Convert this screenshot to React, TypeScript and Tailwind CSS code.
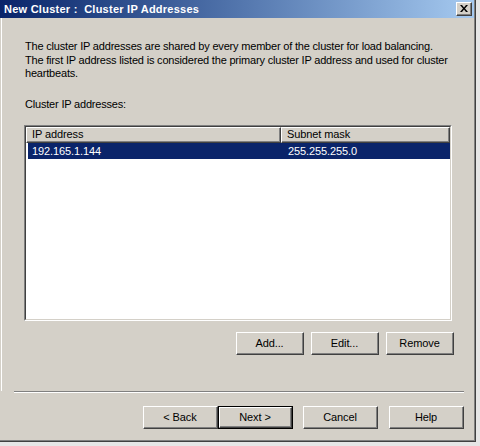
import React from "react";

const font = { fontFamily: '"Liberation Sans", Arial, sans-serif' };

function Btn({
  label,
  w = "w-[75px]",
  isDefault = false,
}: {
  label: string;
  w?: string;
  isDefault?: boolean;
}) {
  // Classic raised push button: white top-left, dark bottom-right, grey inner shade.
  const inner = (
    <div className="h-full w-full border-t border-l border-white border-r border-b border-r-[#404040] border-b-[#404040]">
      <div className="h-full w-full border-r border-b border-r-[#808080] border-b-[#808080] flex items-center justify-center text-[11px] tracking-[-0.1px] text-black">
        {label}
      </div>
    </div>
  );
  if (isDefault) {
    return <div className={`${w} h-[23px] border border-black bg-[#d4d0c8]`}>{inner}</div>;
  }
  return <div className={`${w} h-[23px] bg-[#d4d0c8]`}>{inner}</div>;
}

function HeaderCell({ label, w }: { label: string; w: string }) {
  return (
    <div className={`${w} h-full border-t border-l border-white border-r border-b border-r-[#404040] border-b-[#404040]`}>
      <div className="h-full border-r border-b border-r-[#808080] border-b-[#808080] pl-[5px] flex items-center text-[11px] tracking-[-0.1px] text-black">
        {label}
      </div>
    </div>
  );
}

export default function App() {
  return (
    <div className="w-[480px] h-[446px] bg-[#e6e6e6] overflow-hidden" style={font}>
      <div className="w-[476px] h-[442px] border-r border-b border-[#404040]">
        <div className="h-full border-r border-b border-[#808080] bg-[#d4d0c8] flex flex-col">
          {/* Title bar */}
          <div className="h-[18px] bg-gradient-to-r from-[#0a246a] to-[#a6caf0] flex items-center justify-between pl-[4px] pr-[2px]">
            <span className="text-white font-bold text-[11px] tracking-[0.25px] whitespace-pre leading-none">
              {"New Cluster :  Cluster IP Addresses"}
            </span>
            <div className="w-[16px] h-[14px] bg-[#d4d0c8] border-t border-l border-white border-r border-b border-r-[#404040] border-b-[#404040]">
              <div className="h-full w-full border-r border-b border-r-[#808080] border-b-[#808080] flex items-center justify-center">
                <svg width="8" height="7" viewBox="0 0 8 7">
                  <path d="M0 0h2l2 2.5L6 0h2L5 3.5 8 7H6L4 4.5 2 7H0l3-3.5z" fill="#000" />
                </svg>
              </div>
            </div>
          </div>

          {/* Body */}
          <div className="flex-1 ml-[1px] border-l border-white flex flex-col pl-[23px] pr-[22px] pt-[22px]">
            <p className="text-[11px] leading-[13.5px] tracking-[-0.19px] text-black whitespace-nowrap">
              The cluster IP addresses are shared by every member of the cluster for load balancing.
              <br />
              The first IP address listed is considered the primary cluster IP address and used for cluster
              <br />
              heartbeats.
            </p>
            <div className="mt-[17px] text-[11px] leading-[13.5px] tracking-[-0.19px] text-black">
              Cluster IP addresses:
            </div>

            {/* List view */}
            <div className="mt-[14px] -ml-[1px] w-[428px] h-[196px] border-t border-l border-[#808080] border-r border-b border-r-white border-b-white">
              <div className="h-full w-full border-t border-l border-[#404040] border-r border-b border-r-[#d4d0c8] border-b-[#d4d0c8] bg-white flex flex-col">
                <div className="h-[16px] flex bg-[#d4d0c8]">
                  <HeaderCell label="IP address" w="w-[255px]" />
                  <HeaderCell label="Subnet mask" w="w-[169px]" />
                </div>
                <div className="h-[16px] ml-[2px] flex items-center bg-[#0a246a] text-white text-[11px] tracking-[-0.1px]">
                  <div className="w-[253px] pl-[4px]">192.165.1.144</div>
                  <div className="pl-[7px]">255.255.255.0</div>
                </div>
              </div>
            </div>

            <div className="mt-[11px] -mr-[2px] flex justify-end gap-[7px]">
              <Btn label="Add..." w="w-[68px]" />
              <Btn label="Edit..." w="w-[68px]" />
              <Btn label="Remove" w="w-[68px]" />
            </div>
          </div>

          {/* Separator + wizard buttons */}
          <div className="pl-[14px] pr-[10px] pb-[11px]">
            <div className="h-[2px] border-t border-[#808080] border-b border-b-white" />
            <div className="mt-[13px] flex justify-end">
              <Btn label="< Back" />
              <Btn label="Next >" isDefault />
              <div className="w-[10px]" />
              <Btn label="Cancel" />
              <div className="w-[11px]" />
              <Btn label="Help" />
            </div>
          </div>
        </div>
      </div>
    </div>
  );
}
